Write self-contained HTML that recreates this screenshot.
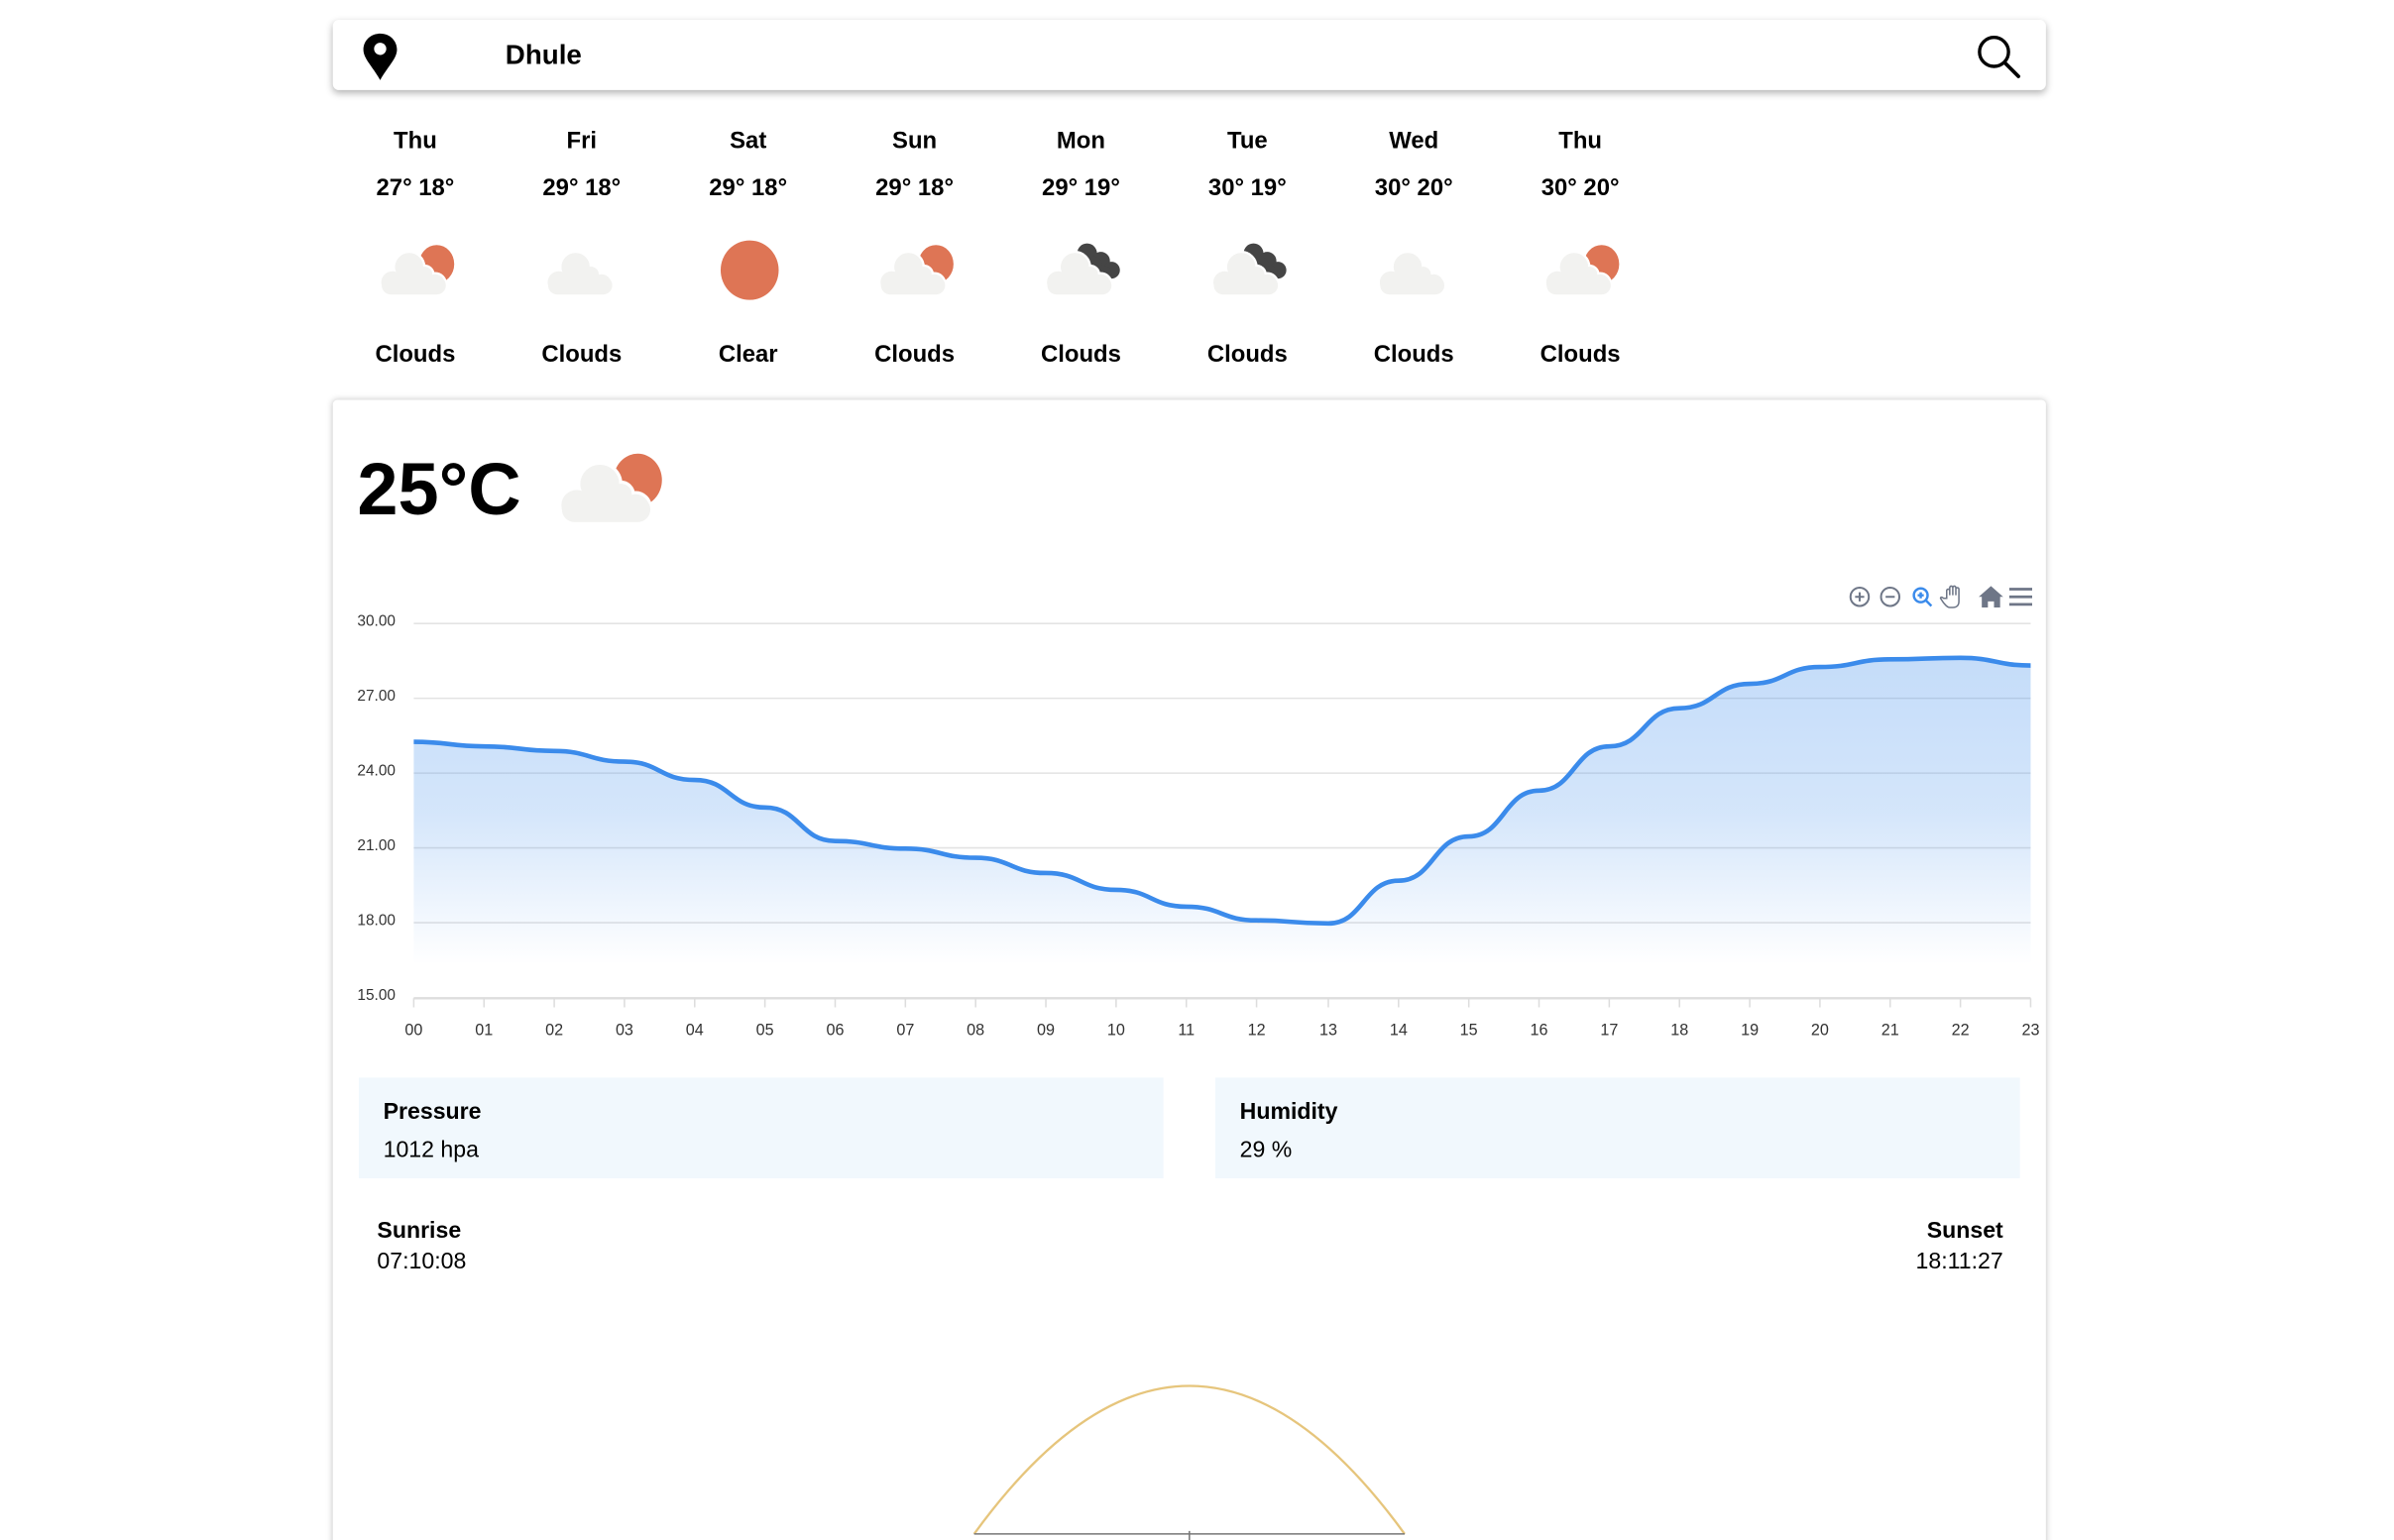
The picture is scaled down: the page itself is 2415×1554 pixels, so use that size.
<!DOCTYPE html>
<html><head><meta charset="utf-8">
<style>
html,body{margin:0;padding:0;background:#fff;overflow:hidden;}
body{width:2415px;height:1554px;position:relative;font-family:"Liberation Sans",sans-serif;}
#w{position:absolute;left:0;top:0;width:1568px;height:1010px;transform:scale(1.5402);transform-origin:0 0;}
.a{position:absolute;}
.bar{left:218px;top:13px;width:1122px;height:46px;background:#fff;border-radius:4px;box-shadow:0 2px 5px rgba(0,0,0,.3);}
.day{position:absolute;width:100px;text-align:center;font-weight:bold;font-size:15.5px;color:#000;}
.card{left:218px;top:262px;width:1122px;height:770px;background:#fff;box-shadow:0 0 4px rgba(0,0,0,.25);border-radius:3px;}
.yl{position:absolute;left:234px;font-size:10px;color:#333;}
.xl{position:absolute;top:669px;font-size:10.5px;color:#333;width:30px;text-align:center;}
.box{position:absolute;top:706px;width:527px;height:66px;background:#f1f8fd;}
.box b{position:absolute;left:16px;top:14px;font-size:15px;}
.box span{position:absolute;left:16px;top:39px;font-size:15px;}
</style></head><body><div id="w">
<svg width="0" height="0" style="position:absolute">
<defs>
<g id="cl"><g fill="#f2f2f0" stroke="#fff" stroke-width="1.5"><circle cx="26" cy="18" r="10"/><circle cx="36" cy="23" r="6"/><circle cx="15" cy="28" r="8"/><circle cx="43" cy="29" r="7"/></g><rect x="8" y="24" width="42" height="12" rx="6" fill="#f2f2f0"/><circle cx="26" cy="18" r="9.2" fill="#f2f2f0"/><circle cx="36" cy="23" r="5.2" fill="#f2f2f0"/><circle cx="15" cy="28" r="7.2" fill="#f2f2f0"/><circle cx="43" cy="29" r="6.2" fill="#f2f2f0"/></g>
<g id="dk" fill="#454545"><circle cx="34" cy="9" r="6.5"/><circle cx="43" cy="14" r="6"/><circle cx="50" cy="20" r="5.5"/><circle cx="38" cy="17" r="6"/><circle cx="45" cy="22" r="5"/></g>
</defs></svg>
<div class="a bar"></div>
<svg class="a" style="left:236px;top:20px" width="26" height="34" viewBox="0 0 26 34"><path d="M13 2C6.5 2 2 6.8 2 12.5c0 6 6 11 11 20c5-9 11-14 11-20C24 6.8 19.5 2 13 2z" fill="#000"/><circle cx="13" cy="12" r="4" fill="#fff"/></svg>
<div class="a" style="left:331px;top:26px;font-size:18px;font-weight:bold;">Dhule</div>
<svg class="a" style="left:1294px;top:22px" width="30" height="30" viewBox="0 0 30 30"><circle cx="12" cy="12" r="9.5" fill="none" stroke="#000" stroke-width="2.2"/><line x1="19" y1="19" x2="28" y2="28" stroke="#000" stroke-width="2.4" stroke-linecap="round"/></svg>

<div class="day" style="left:222px;top:84px">Thu</div><div class="day" style="left:222px;top:115px">27° 18°</div><div class="day" style="left:222px;top:224px">Clouds</div>
<div class="day" style="left:331px;top:84px">Fri</div><div class="day" style="left:331px;top:115px">29° 18°</div><div class="day" style="left:331px;top:224px">Clouds</div>
<div class="day" style="left:440px;top:84px">Sat</div><div class="day" style="left:440px;top:115px">29° 18°</div><div class="day" style="left:440px;top:224px">Clear</div>
<div class="day" style="left:549px;top:84px">Sun</div><div class="day" style="left:549px;top:115px">29° 18°</div><div class="day" style="left:549px;top:224px">Clouds</div>
<div class="day" style="left:658px;top:84px">Mon</div><div class="day" style="left:658px;top:115px">29° 19°</div><div class="day" style="left:658px;top:224px">Clouds</div>
<div class="day" style="left:767px;top:84px">Tue</div><div class="day" style="left:767px;top:115px">30° 19°</div><div class="day" style="left:767px;top:224px">Clouds</div>
<div class="day" style="left:876px;top:84px">Wed</div><div class="day" style="left:876px;top:115px">30° 20°</div><div class="day" style="left:876px;top:224px">Clouds</div>
<div class="day" style="left:985px;top:84px">Thu</div><div class="day" style="left:985px;top:115px">30° 20°</div><div class="day" style="left:985px;top:224px">Clouds</div>

<svg class="a" style="left:242px;top:157px" width="60" height="40" viewBox="0 0 60 40"><ellipse cx="44" cy="16" rx="11.5" ry="12.5" fill="#de7555"/><use href="#cl"/></svg>
<svg class="a" style="left:351px;top:157px" width="60" height="40" viewBox="0 0 60 40"><use href="#cl"/></svg>
<svg class="a" style="left:460px;top:157px" width="60" height="40" viewBox="0 0 60 40"><ellipse cx="31" cy="20" rx="19" ry="19.5" fill="#de7555"/></svg>
<svg class="a" style="left:569px;top:157px" width="60" height="40" viewBox="0 0 60 40"><ellipse cx="44" cy="16" rx="11.5" ry="12.5" fill="#de7555"/><use href="#cl"/></svg>
<svg class="a" style="left:678px;top:157px" width="60" height="40" viewBox="0 0 60 40"><use href="#dk"/><use href="#cl"/></svg>
<svg class="a" style="left:787px;top:157px" width="60" height="40" viewBox="0 0 60 40"><use href="#dk"/><use href="#cl"/></svg>
<svg class="a" style="left:896px;top:157px" width="60" height="40" viewBox="0 0 60 40"><use href="#cl"/></svg>
<svg class="a" style="left:1005px;top:157px" width="60" height="40" viewBox="0 0 60 40"><ellipse cx="44" cy="16" rx="11.5" ry="12.5" fill="#de7555"/><use href="#cl"/></svg>

<div class="a card"></div>
<div class="a" style="left:234px;top:294px;font-size:48px;font-weight:bold;">25°C</div>
<svg class="a" style="left:357px;top:292px" width="80" height="56" viewBox="0 0 58 40"><ellipse cx="44" cy="16" rx="11.5" ry="12.5" fill="#de7555"/><use href="#cl"/></svg>

<svg class="a" style="left:1208px;top:381px" width="128" height="20" viewBox="0 0 128 20">
<g fill="none" stroke="#6e7687" stroke-width="1.3"><circle cx="10" cy="10" r="6"/><path d="M10 7v6M7 10h6"/><circle cx="30" cy="10" r="6"/><path d="M27 10h6"/></g>
<g fill="none" stroke="#3b8beb" stroke-width="1.6"><circle cx="50" cy="9" r="4.5"/><path d="M53 12l4 4M50 7v4M48 9h4"/></g>
<path d="M67 11v-5a1 1 0 012 0v3v-5a1 1 0 012 0v5v-5a1 1 0 012 0v5v-4a1 1 0 012 0v8c0 3-2 4-4 4h-2c-2 0-3-2-4-3l-2-3c0-1 1-1 2 0z" fill="none" stroke="#6e7687" stroke-width="1"/>
<path d="M88 10l8-7 8 7h-2v7h-4v-4h-4v4h-4v-7z" fill="#6e7687"/>
<path d="M108 5h15M108 10h15M108 15h15" stroke="#6e7687" stroke-width="1.8"/>
</svg>

<svg class="a" style="left:0;top:0" width="1568" height="1010" viewBox="0 0 1568 1010">
<defs><linearGradient id="g" x1="0" y1="430" x2="0" y2="632" gradientUnits="userSpaceOnUse"><stop offset="0" stop-color="#3b8beb" stop-opacity=".3"/><stop offset=".5" stop-color="#3b8beb" stop-opacity=".22"/><stop offset="1" stop-color="#3b8beb" stop-opacity="0"/></linearGradient></defs>
<g stroke="#e3e3e3" stroke-width="1"><line x1="271" y1="408.5" x2="1330" y2="408.5"/><line x1="271" y1="457.5" x2="1330" y2="457.5"/><line x1="271" y1="506.5" x2="1330" y2="506.5"/><line x1="271" y1="555.5" x2="1330" y2="555.5"/><line x1="271" y1="604.5" x2="1330" y2="604.5"/></g>
<line x1="271" y1="654" x2="1330" y2="654" stroke="#ddd" stroke-width="1.5"/>
<g stroke="#ddd"><path d="M271 654v6M317 654v6M363 654v6M409 654v6M455 654v6M501 654v6M547 654v6M593 654v6M639 654v6M685 654v6M731 654v6M777 654v6M823 654v6M870 654v6M916 654v6M962 654v6M1008 654v6M1054 654v6M1100 654v6M1146 654v6M1192 654v6M1238 654v6M1284 654v6M1330 654v6"/></g>
<path fill="url(#g)" d="M271,486 C294,486 294,489 317,489 C340,489 340,492 363,492 C386,492 386,499 409,499 C432,499 432,511 455,511 C478,511 478,529 501,529 C524,529 524,551 547,551 C570,551 570,556 593,556 C616,556 616,562 639,562 C662,562 662,572 685,572 C708,572 708,583 731,583 C754,583 754,594 777,594 C800,594 800,603 823,603 C846,603 846,605 870,605 C893,605 893,577 916,577 C939,577 939,548 962,548 C985,548 985,518 1008,518 C1031,518 1031,489 1054,489 C1077,489 1077,464 1100,464 C1123,464 1123,448 1146,448 C1169,448 1169,437 1192,437 C1215,437 1215,432 1238,432 C1261,432 1261,431 1284,431 C1307,431 1307,436 1330,436 L1330,632 L271,632 Z"/>
<path fill="none" stroke="#3b8beb" stroke-width="3" d="M271,486 C294,486 294,489 317,489 C340,489 340,492 363,492 C386,492 386,499 409,499 C432,499 432,511 455,511 C478,511 478,529 501,529 C524,529 524,551 547,551 C570,551 570,556 593,556 C616,556 616,562 639,562 C662,562 662,572 685,572 C708,572 708,583 731,583 C754,583 754,594 777,594 C800,594 800,603 823,603 C846,603 846,605 870,605 C893,605 893,577 916,577 C939,577 939,548 962,548 C985,548 985,518 1008,518 C1031,518 1031,489 1054,489 C1077,489 1077,464 1100,464 C1123,464 1123,448 1146,448 C1169,448 1169,437 1192,437 C1215,437 1215,432 1238,432 C1261,432 1261,431 1284,431 C1307,431 1307,436 1330,436"/>
<path d="M638 1005 Q779 811 920 1005" fill="none" stroke="#e6c57c" stroke-width="1.5"/>
<line x1="638" y1="1005" x2="920" y2="1005" stroke="#777" stroke-width="1"/>
<line x1="779" y1="1003" x2="779" y2="1010" stroke="#777"/>
</svg>
<div class="yl" style="top:402px">30.00</div><div class="yl" style="top:451px">27.00</div><div class="yl" style="top:500px">24.00</div><div class="yl" style="top:549px">21.00</div><div class="yl" style="top:598px">18.00</div><div class="yl" style="top:647px">15.00</div>
<div class="xl" style="left:256px">00</div><div class="xl" style="left:302px">01</div><div class="xl" style="left:348px">02</div><div class="xl" style="left:394px">03</div><div class="xl" style="left:440px">04</div><div class="xl" style="left:486px">05</div><div class="xl" style="left:532px">06</div><div class="xl" style="left:578px">07</div><div class="xl" style="left:624px">08</div><div class="xl" style="left:670px">09</div><div class="xl" style="left:716px">10</div><div class="xl" style="left:762px">11</div><div class="xl" style="left:808px">12</div><div class="xl" style="left:855px">13</div><div class="xl" style="left:901px">14</div><div class="xl" style="left:947px">15</div><div class="xl" style="left:993px">16</div><div class="xl" style="left:1039px">17</div><div class="xl" style="left:1085px">18</div><div class="xl" style="left:1131px">19</div><div class="xl" style="left:1177px">20</div><div class="xl" style="left:1223px">21</div><div class="xl" style="left:1269px">22</div><div class="xl" style="left:1315px">23</div>

<div class="box" style="left:235px"><b>Pressure</b><span>1012 hpa</span></div>
<div class="box" style="left:796px"><b>Humidity</b><span>29 %</span></div>
<div class="a" style="left:247px;top:798px;font-size:15px;font-weight:bold">Sunrise</div>
<div class="a" style="left:247px;top:818px;font-size:15px">07:10:08</div>
<div class="a" style="left:1212px;width:100px;text-align:right;top:798px;font-size:15px;font-weight:bold">Sunset</div>
<div class="a" style="left:1212px;width:100px;text-align:right;top:818px;font-size:15px">18:11:27</div>
</div></body></html>
